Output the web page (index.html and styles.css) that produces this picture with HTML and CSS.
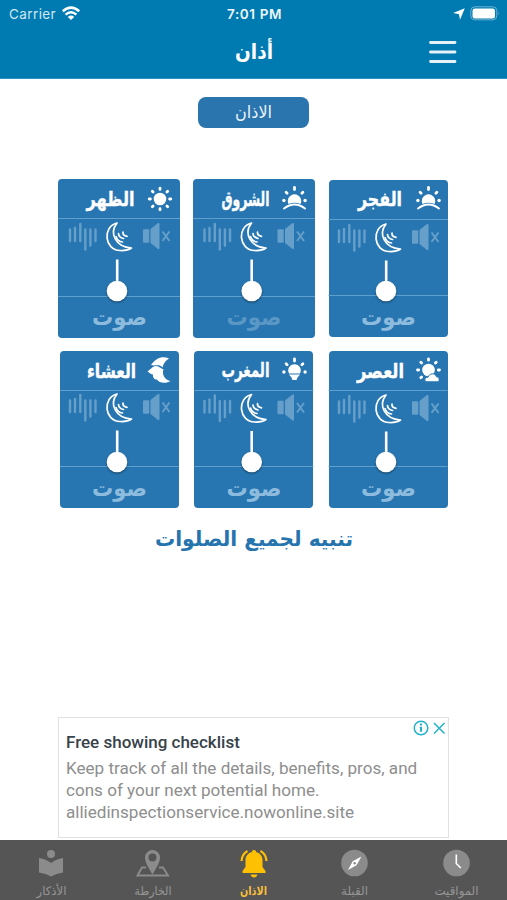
FILE: index.html
```
<!DOCTYPE html>
<html lang="ar">
<head>
<meta charset="utf-8">
<title>أذان</title>
<link rel="stylesheet" href="styles.css">
</head>
<body>
<svg class="defs" width="0" height="0" aria-hidden="true">
  <defs>
    <g id="rays-top">
      <circle cx="-10.600" cy="1.500" r="1.700"/><circle cx="10.600" cy="1.500" r="1.700"/>
      <path d="M-8.400-6.800l1 1M8.400-6.800l-1 1M0-11.500v2" class="ray"/>
    </g>
    <g id="sun">
      <circle r="6.300"/>
      <path d="M0-10.800v1.200M0 9.600v1.200M-10.800 0h1.200M9.600 0h1.200M-7.700-7.700l.8.8M6.900 6.900l.8.8M-7.700 7.700l.8-.8M6.900-6.900l.8-.8" class="ray"/>
    </g>
    <g id="sunrise">
      <use href="#rays-top"/>
      <path d="M-6 5A6.700 6.700 0 1 1 6 5Q0 2.500-6 5z"/>
      <path d="M-10.500 9.500Q0 1.500 10.500 9.500" class="horizon"/>
    </g>
    <g id="cloudy">
      <path d="M0-11v1.200M-11 0h1.200M9.800 0h1.200M-7.700-7.700l.8.8M-7.700 7.700l.8-.8M6.900-6.900l.8-.8" class="ray"/>
      <circle r="6.300"/>
      <path d="M-2.500 11.800c-2.500-2-.5-5 2-4.500 1-4 7-5 8.500-.5 3 0 3.500 4 1.500 5z" class="cloud"/>
    </g>
    <g id="sunset">
      <use href="#rays-top"/>
      <path d="M-5.500 3A6.300 6.300 0 1 1 5.500 3zM-5.500 4H5.500L4 6H3.500L2 9.500H-2L-3.500 6H-4z"/>
    </g>
    <g id="night">
      <path d="M-9-4.500C-4-12 3-14 9-11 5-8.500 3-5 2.500-2-1-6-5-3-9-4.500z"/>
      <path d="M-12.500 2C-9-.500-7-3.500-4-3.500-1-3.500 1-1 3.500 0 1.500 5 5 10.500 10.500 11.500 6 14.500-1 13.500-3 10-6 10.500-7.500 7-7 5-9 5-10.500 3.500-12.500 2z"/>
    </g>
    <g id="controls">
      <g class="dim">
        <rect x="85" y="50.300" width="6.200" height="13.400" rx="1"/><path d="M92.500 50l7.500-6q1.500-.5 1.500 1v24q0 1.500-1.500 1L92.500 64z"/>
        <path d="M104.500 52.500l7 9.500M111.500 52.500l-7 9.500" class="cross"/>
        <path d="M12 50.500v11.500M17 49v13M22.300 45v17M27.300 50.500v20M32.400 50.500v16M37.500 50.500v11.500" class="bars"/>
      </g>
      <path d="M59 44C44 48 46.500 71 62 71.500 67 71.800 71 70.800 73.500 69 57.500 68 51 54 59 44z" class="moon"/>
      <path d="M60.500 54.500q.3 4 5 5M65 53q-.5 3.500 4 4.300M58 57.500q1.500 5 6.500 5.500" class="moon"/>
      <path d="M59.200 80.500v25" class="stem"/>
    </g>
  </defs>
</svg>

<header class="top">
  <div class="status" dir="ltr">
    <div class="side">
      <span class="carrier">Carrier</span>
      <svg class="wifi" width="20" height="15" viewBox="0 0 20 15"><path d="M1.800 5.200Q10-2 18.200 5.200M4.600 8.600Q10 4 15.400 8.600" fill="none" stroke="#fff" stroke-width="2.500"/><path d="M6.800 11Q10 8.200 13.200 11L10 14z" fill="#fff"/></svg>
    </div>
    <span class="time">7:01 PM</span>
    <div class="side right">
      <svg width="12" height="12" viewBox="0 0 12 12"><path d="M11.800.3L7 11.800 6 6.300.2 5z" fill="#fff"/></svg>
      <svg width="30" height="15" viewBox="0 0 30 15"><rect x=".8" y=".8" width="26" height="13" rx="4" fill="none" stroke="#6fb4d3"/><rect x="2.500" y="2.500" width="22.500" height="10" rx="2.500" fill="#fff"/><path d="M28.500 5.500q1.500 1.800 0 3.600z" fill="#6fb4d3"/></svg>
    </div>
  </div>
  <div class="bar">
    <svg class="title" width="60" height="40" viewBox="0 0 60 40"><text x="30" y="26.500" font-size="21" textLength="38" lengthAdjust="spacingAndGlyphs">أذان</text></svg>
    <svg class="menu" width="28" height="24" viewBox="0 0 28 24"><path d="M1.500 2.500h24.500M1.500 12h24.500M1.500 21.500h24.500" stroke="#e6f2f8" stroke-width="2.800" stroke-linecap="round"/></svg>
  </div>
</header>

<main>
  <button class="pill"><svg width="111" height="31" viewBox="0 0 111 31"><text x="55.500" y="20.500" font-size="17" textLength="37" lengthAdjust="spacingAndGlyphs">الاذان</text></svg></button>

  <section class="cards">
    <article class="card dhuhr"><svg viewBox="0 0 122 159"><path class="rule" d="M0 39.500h122M0 117.500h122"/><text class="name" x="52.500" y="27" textLength="48" lengthAdjust="spacingAndGlyphs">الظهر</text><use href="#sun" x="102" y="20" class="white"/><use href="#controls"/><circle class="knob" cx="59" cy="112" r="10.300"/><text class="sound" x="61.500" y="146" textLength="55" lengthAdjust="spacingAndGlyphs">صوت</text></svg></article>
    <article class="card shuruq"><svg viewBox="0 0 122 159"><path class="rule" d="M0 39.500h122M0 117.500h122"/><text class="name" x="52.500" y="27" textLength="48" lengthAdjust="spacingAndGlyphs">الشروق</text><use href="#sunrise" x="101.500" y="20" class="white"/><use href="#controls" x="-.500"/><circle class="knob" cx="58.700" cy="112" r="10.300"/><text class="sound faint" x="61" y="146" textLength="55" lengthAdjust="spacingAndGlyphs">صوت</text></svg></article>
    <article class="card fajr"><svg viewBox="0 0 122 159"><path class="rule" d="M1.500 40.500h119.500M1.500 116.500h119.500"/><text class="name" x="53" y="26.500" textLength="44" lengthAdjust="spacingAndGlyphs">الفجر</text><use href="#sunrise" x="101.500" y="20" class="white"/><use href="#controls" y="1"/><circle class="knob" cx="59" cy="112" r="10.300"/><text class="sound" x="61.500" y="146" textLength="55" lengthAdjust="spacingAndGlyphs">صوت</text></svg></article>
    <article class="card isha"><svg viewBox="0 0 122 159"><path class="rule" d="M2 39.500h119M2 115.500h119"/><text class="name" x="53.500" y="26.500" textLength="49" lengthAdjust="spacingAndGlyphs">العشاء</text><use href="#night" x="102" y="18.500" class="white"/><use href="#controls" y="-1"/><circle class="knob" cx="59" cy="111" r="10.300"/><text class="sound" x="61.500" y="145" textLength="55" lengthAdjust="spacingAndGlyphs">صوت</text></svg></article>
    <article class="card maghrib"><svg viewBox="0 0 122 159"><path class="rule" d="M1.500 39.500h119M1.500 115.500h119"/><text class="name" x="52.500" y="26" textLength="48" lengthAdjust="spacingAndGlyphs">المغرب</text><use href="#sunset" x="101.500" y="19.500" class="white"/><use href="#controls" x="-.500" y="-.500"/><circle class="knob" cx="58.700" cy="111" r="10.300"/><text class="sound" x="61" y="145" textLength="55" lengthAdjust="spacingAndGlyphs">صوت</text></svg></article>
    <article class="card asr"><svg viewBox="0 0 122 159"><path class="rule" d="M1.500 39.500h119M1.500 115.500h119"/><text class="name" x="53.500" y="26.500" textLength="47" lengthAdjust="spacingAndGlyphs">العصر</text><use href="#cloudy" x="101.500" y="19" class="white"/><use href="#controls" y="0"/><circle class="knob" cx="59" cy="111" r="10.300"/><text class="sound" x="61.500" y="145" textLength="55" lengthAdjust="spacingAndGlyphs">صوت</text></svg></article>
  </section>

  <svg class="notice" width="300" height="50" viewBox="0 0 300 50"><text x="150" y="31" font-size="21" textLength="198" lengthAdjust="spacingAndGlyphs">تنبيه لجميع الصلوات</text></svg>

  <aside class="ad" dir="ltr" lang="en">
    <svg class="choices" width="34" height="16" viewBox="0 0 34 16"><g fill="none" stroke="#22b1cd" stroke-width="1.500"><circle cx="8" cy="8" r="6.800"/><path d="M21 3l10.500 10.500M31.500 3L21 13.500"/></g><path d="M7 3.500h2v2H7zM6.500 6.800H9v5H7v-4h-.5z" fill="#22b1cd"/></svg>
    <h2>Free showing checklist</h2>
    <p>Keep track of all the details, benefits, pros, and<br>cons of your next potential home.<br>alliedinspectionservice.nowonline.site</p>
  </aside>
</main>

<nav class="tabs" dir="ltr">
  <a><svg viewBox="0 0 101 60"><g class="ico"><circle cx="51" cy="14" r="4"/><path d="M39 18q7 1 12 5 5-4 12-5v14.500q-7 1-12 4-5-3-12-4z"/></g><text x="51.500" y="54.500" textLength="30" lengthAdjust="spacingAndGlyphs">الأذكار</text></svg></a>
  <a><svg viewBox="0 0 101 60"><g class="ico"><path fill-rule="evenodd" d="M51.500 34.500C47 27 44 22 44 17.500a7.500 7.500 0 0 1 15 0c0 4.500-3 9.500-7.500 17zM51.500 13.500a4 4 0 1 0 0 8 4 4 0 0 0 0-8z"/><path d="M45 27.500h-4L36.500 35.500h30.500l-5-8H58" fill="none" stroke="#8b8b8b" stroke-width="1.900"/></g><text x="52" y="54.500" textLength="37" lengthAdjust="spacingAndGlyphs">الخارطة</text></svg></a>
  <a class="active"><svg viewBox="0 0 101 60"><g class="ico"><path d="M51 10c1.500 0 2 .8 2 2 4 1 6.500 4 6.500 8v7l3 4v2H39.500v-2l3-4v-7c0-4 2.500-7 6.500-8 0-1.200.5-2 2-2zM47.500 34.500h7q-1 3-3.500 3T47.500 34.500z"/><path d="M44.500 11Q39 14 38.500 21M57.500 11q5.500 3 6 10" fill="none" stroke="#fec003" stroke-width="2.200"/></g><text x="50.500" y="54.500" textLength="27" lengthAdjust="spacingAndGlyphs">الاذان</text></svg></a>
  <a><svg viewBox="0 0 101 60"><g class="ico"><circle cx="50.500" cy="23" r="13.300"/></g><path d="M57.500 16.500l-5 8.800-8.500 4.700 4.700-8.700z" fill="#fff"/><circle cx="50.700" cy="23.200" r="1.200" fill="#888"/><text x="50.500" y="54.500" textLength="27" lengthAdjust="spacingAndGlyphs">القبلة</text></svg></a>
  <a><svg viewBox="0 0 101 60"><g class="ico"><circle cx="50.500" cy="23" r="13.300"/></g><path d="M50.300 14.500v9l4.500 4.500" fill="none" stroke="#fff" stroke-width="1.600"/><text x="50.500" y="54.500" textLength="44" lengthAdjust="spacingAndGlyphs">المواقيت</text></svg></a>
</nav>
</body>
</html>
```
FILE: styles.css
```
* { box-sizing: border-box; }
body {
  margin: 0;
  height: 900px;
  display: flex;
  flex-direction: column;
  background: #fff;
  overflow: hidden;
  font-family: "DejaVu Sans", sans-serif;
}
svg { display: block; }
.defs { flex: none; }
text { text-anchor: middle; font-family: "DejaVu Sans", sans-serif; }

.top { height: 79px; flex: none; background: #007bb1; border-bottom: 1px solid #2b94c4; color: #fff; }
.status {
  height: 27px;
  display: grid;
  grid-template-columns: 1fr auto 1fr;
  align-items: center;
  padding: 0 7px 0 9px;
  font-family: Inter, sans-serif;
  font-size: 13.5px;
}
.side { display: flex; align-items: center; gap: 5px; }
.right { justify-content: flex-end; }
.carrier { color: #cfe8f3; letter-spacing: .4px; }
.time { font-weight: 600; font-size: 13.500px; letter-spacing: .6px; color: #eef7fb; }
.bar { height: 51px; display: grid; grid-template-columns: 1fr 60px 1fr; align-items: center; }
.title { grid-column: 2; margin-top: -2px; }
.title text { fill: #fff; font-weight: bold; }
.menu { margin-left: 145.500px; margin-top: -1px; }

main { flex: 1; display: flex; flex-direction: column; align-items: center; min-height: 0; }
.pill { margin: 18px 0 0; width: 111px; height: 31px; padding: 0; border: 0; border-radius: 8px; background: #2a75ae; flex: none; }
.pill text { fill: #eaf3fa; }

.cards {
  align-self: flex-start;
  margin: 51px 0 0 58px;
  display: grid;
  grid-template-columns: repeat(3, 122px);
  grid-template-rows: repeat(2, 159px);
  gap: 13px 12.500px;
  flex: none;
}
.card { background: #2776b1; border-radius: 4px; height: 159px; margin: 0; }
.card svg { width: 122px; height: 159px; }
.fajr { margin: 1px 1.500px 1px 1.500px; height: 157px; }
.fajr svg { margin: -1px 0 0 -1.500px; }
.isha { margin: 0 1px 0 2px; height: 157px; }
.isha svg { margin-left: -2px; }
.maghrib, .asr { margin: 0 1.500px; height: 157px; }
.maghrib svg, .asr svg { margin-left: -1.500px; }
.white { fill: #fff; }
.ray { stroke: #fff; stroke-width: 2.800; stroke-linecap: round; fill: none; }
.horizon { fill: none; stroke: #fff; stroke-width: 1.900; stroke-linecap: round; }
.cloud { stroke: #2776b1; stroke-width: 1; }
.rule { stroke: #5f9fcd; stroke-width: 1; fill: none; }
.name { fill: #fff; font-weight: bold; font-size: 20px; stroke: #fff; stroke-width: .4; }
.dim { fill: #669fca; }
.cross { fill: none; stroke: #669fca; stroke-width: 2; }
.bars { fill: none; stroke: #669fca; stroke-width: 2.400; stroke-linecap: round; }
.moon { fill: none; stroke: #fff; stroke-width: 1.700; stroke-linejoin: round; stroke-linecap: round; }
.stem { stroke: #fff; stroke-width: 2.600; }
.knob { fill: #fff; filter: drop-shadow(0 1px 1px rgba(0, 0, 0, .45)); }
.sound { fill: #8dbbdd; font-weight: bold; font-size: 23px; }
.faint { fill: #5a97c5; }

.notice { flex: none; margin-top: 5px; }
.notice text { fill: #2574ae; font-weight: bold; }

.ad {
  align-self: flex-start;
  position: relative;
  margin: 152px 0 0 58px;
  width: 391px;
  height: 121px;
  flex: none;
  border: 1px solid #e2e2e2;
  padding: 14px 7px;
  font-family: Roboto, sans-serif;
}
.choices { position: absolute; right: 1px; top: 2px; }
.ad h2 { margin: 0; font-size: 17px; line-height: 20px; font-weight: 500; color: #37424a; }
.ad p { margin: 5px 0 0; font-size: 17.080px; line-height: 22px; color: #8e8e8e; white-space: nowrap; }

.tabs { height: 60px; flex: none; display: grid; grid-template-columns: repeat(5, 1fr); background: #555; }
.tabs svg { width: 101px; height: 60px; }
.tabs text { font-size: 12px; fill: #969696; }
.ico { fill: #8b8b8b; }
.active .ico { fill: #fec003; }
.tabs .active text { fill: #f5bd3c; font-weight: bold; }
```
